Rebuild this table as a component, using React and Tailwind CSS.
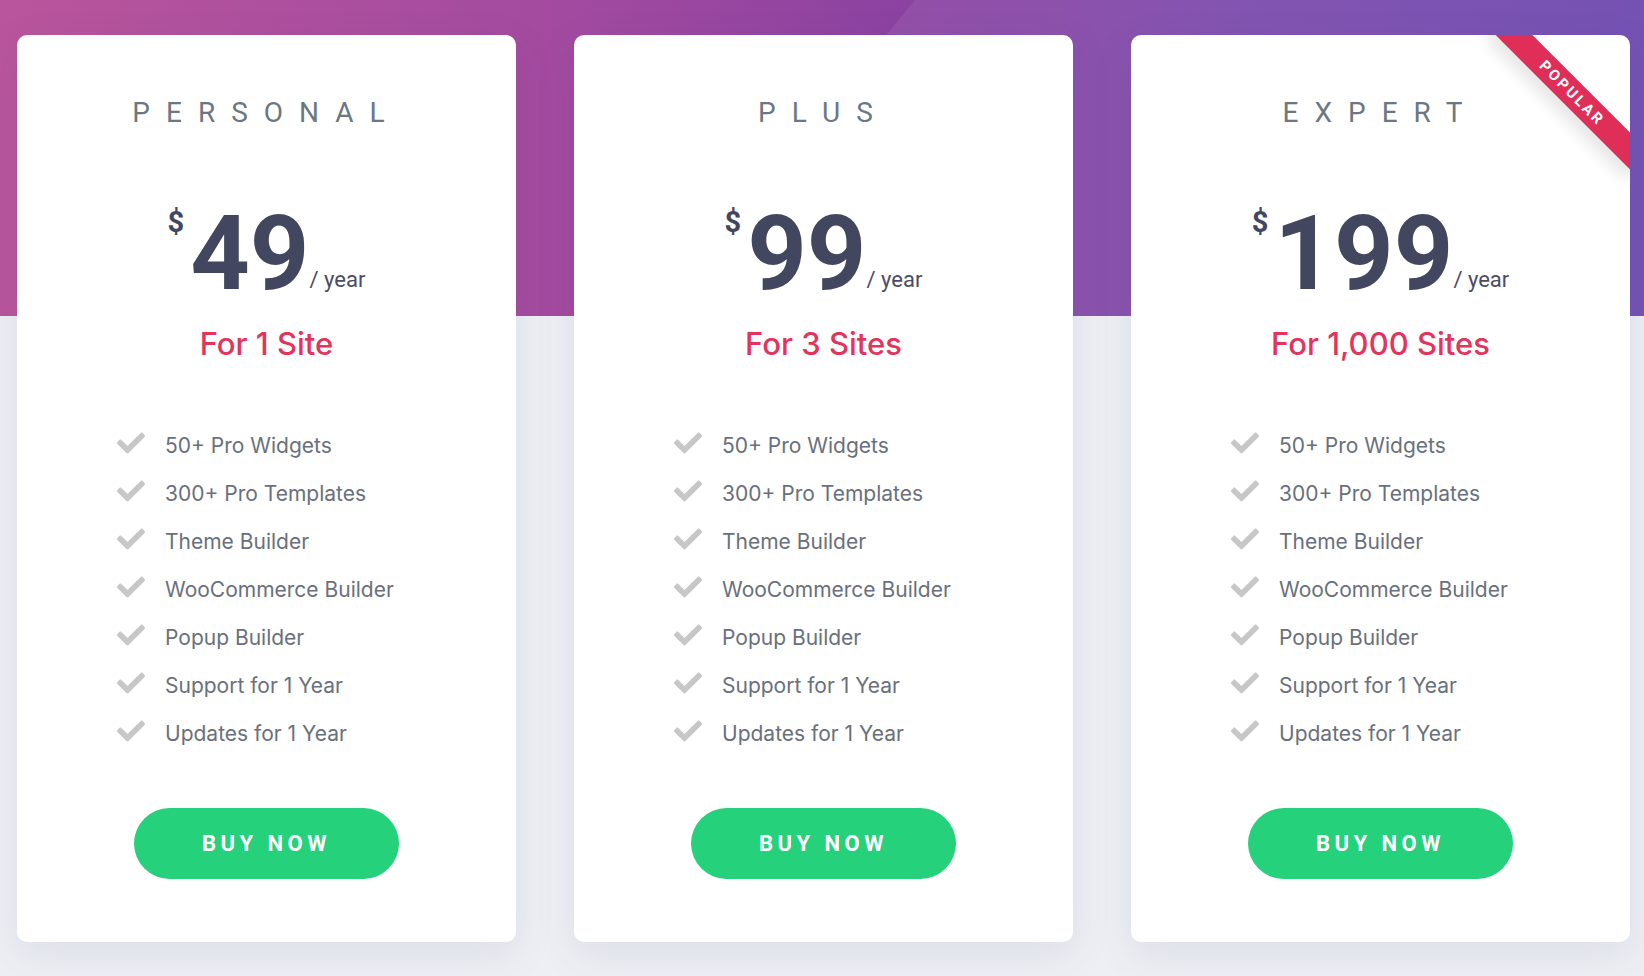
import { FaCheck } from "react-icons/fa";

const plans = [
  { name: "PERSONAL", price: "49", sites: "For 1 Site" },
  { name: "PLUS", price: "99", sites: "For 3 Sites" },
  { name: "EXPERT", price: "199", sites: "For 1,000 Sites", popular: true },
];

const features = [
  "50+ Pro Widgets",
  "300+ Pro Templates",
  "Theme Builder",
  "WooCommerce Builder",
  "Popup Builder",
  "Support for 1 Year",
  "Updates for 1 Year",
];

function PlanCard({ plan }) {
  return (
    <div className="relative flex-1 overflow-hidden rounded-[10px] bg-white pt-[64px] pb-[63px] shadow-[0_12px_40px_rgba(70,80,120,0.10)]">
      {plan.popular && (
        <div className="absolute top-[45px] right-[-42px] flex h-[26px] w-[200px] rotate-45 items-center justify-center bg-[#df2f58] font-['Roboto',sans-serif] text-[15px] font-bold tracking-[2.5px] text-white shadow-[0_10px_16px_rgba(0,0,0,0.10)]">
          POPULAR
        </div>
      )}

      <h3 className="text-center font-['Roboto',sans-serif] text-[28px] leading-[28px] font-normal tracking-[16px] text-[#6d7782]">
        {plan.name}
      </h3>

      <div className="mt-[75px] flex items-baseline justify-center font-['Roboto',sans-serif] text-[#43465f]">
        <span className="mt-[6px] mr-[6px] self-start text-[29px] leading-none font-bold">$</span>
        <span className="text-[104px] leading-none font-bold">{plan.price}</span>
        <span className="relative -top-[2px] text-[22px] leading-none text-[#4a4d65]">/ year</span>
      </div>

      <div className="mt-[22px] text-center font-['Inter',sans-serif] text-[31px] leading-[31px] font-medium text-[#e2345c]">
        {plan.sites}
      </div>

      <ul className="mt-[72px] flex flex-col gap-[18px] pl-[100px] font-['Inter',sans-serif] text-[21px] leading-[30px] text-[#69707c]">
        {features.map((f) => (
          <li key={f} className="flex h-[30px] items-center gap-[20px]">
            <FaCheck size={28} className="relative -top-[3px] shrink-0 text-[#c7c7c7]" />
            <span>{f}</span>
          </li>
        ))}
      </ul>

      <div className="mt-[59px] flex justify-center">
        <button className="h-[71px] w-[265px] rounded-full bg-[#25d17b] font-['Roboto',sans-serif] text-[22px] font-bold tracking-[4.5px] text-white">
          BUY NOW
        </button>
      </div>
    </div>
  );
}

export default function App() {
  return (
    <div className="relative h-[976px] w-full overflow-hidden bg-[#edeff4]">
      {/* purple band behind the cards */}
      <div className="absolute inset-x-0 top-0 h-[316px] bg-[linear-gradient(90deg,#b9559c_0%,#a24aa0_35%,#8b42a1_55%,#7a47ab_75%,#6a45ad_100%)]">
        <div className="absolute inset-0 bg-white/[0.07] [clip-path:polygon(915px_0,100%_0,100%_100%,655px_100%)]" />
      </div>

      <div className="relative flex gap-[58px] pt-[35px] pr-[14px] pl-[17px]">
        {plans.map((p) => (
          <PlanCard key={p.name} plan={p} />
        ))}
      </div>
    </div>
  );
}
